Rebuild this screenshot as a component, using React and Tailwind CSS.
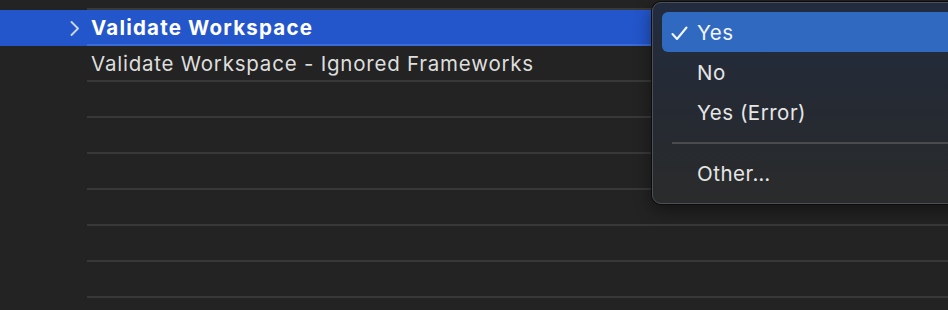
import React from "react";

const rows = [
  "Validate Workspace - Ignored Frameworks",
  "",
  "",
  "",
  "",
  "",
  "",
];

function Check() {
  return (
    <svg width="17" height="15" viewBox="0 0 17 15" fill="none">
      <path d="M1.5 8 L6 13 L15.5 1.5" stroke="#f2f4f8" strokeWidth="2.1" strokeLinecap="round" strokeLinejoin="round" />
    </svg>
  );
}

export default function App() {
  return (
    <div
      className="relative h-[310px] w-[948px] overflow-hidden bg-[#232323]"
      style={{ fontFamily: "Inter, 'Noto Sans', sans-serif" }}
    >
      {/* Settings table */}
      <div className="h-[8px]" />
      <div className="ml-[87px] h-[2px] bg-[#393939]" />

      {/* Selected row */}
      <div className="bg-[#2356cb]">
        <div className="flex h-[34px] items-center pt-[2px]">
          <div className="flex w-[87px] justify-end pr-[7px]">
            <svg width="11" height="17" viewBox="0 0 11 17" fill="none">
              <path d="M2.5 2 L9 8.5 L2.5 15" stroke="#c9d6f3" strokeWidth="1.9" strokeLinecap="round" strokeLinejoin="round" />
            </svg>
          </div>
          <span className="pl-[4px] text-[20.5px] font-bold tracking-[1.2px] text-white">Validate Workspace</span>
        </div>
        <div className="ml-[87px] h-[2px] bg-[#3a6ad8]" />
      </div>

      {rows.map((label, i) => (
        <div key={i}>
          <div className="flex h-[34px] items-center pl-[91px] pt-[2px]">
            <span className="text-[20.5px] tracking-[0.78px] text-[#dedede]">{label}</span>
          </div>
          <div className="ml-[87px] h-[2px] bg-[#383838]" />
        </div>
      ))}

      {/* Popup menu */}
      <div className="absolute left-[652px] top-[2px] h-[202px] w-[320px] rounded-[9px] shadow-[0_0_0_1px_#0c0c0c,0_6px_18px_rgba(0,0,0,0.45)]">
        <div className="h-full w-full rounded-[9px] border border-[#4c4f55] bg-gradient-to-b from-[#222c3f] via-[#252a33] to-[#2a2b2b] px-[9px] pt-[9px]">
          <div className="flex h-[40px] items-center rounded-[6px] bg-[#3069c0] pt-[3px]">
            <div className="flex w-[35px] justify-start pl-[9px]">
              <Check />
            </div>
            <span className="text-[20.5px] tracking-[0.5px] text-[#f3f5f9]">Yes</span>
          </div>
          <div className="flex h-[40px] items-center pl-[35px] pt-[3px] text-[20.5px] tracking-[0.5px] text-[#e6e6e6]">No</div>
          <div className="flex h-[40px] items-center pl-[35px] pt-[3px] text-[20.5px] tracking-[0.5px] text-[#e6e6e6]">Yes (Error)</div>
          <div className="ml-[10px] mt-[10px] h-[2px] bg-[#4a4b4d]" />
          <div className="mt-[9px] flex h-[40px] items-center pl-[35px] pt-[3px] text-[20.5px] tracking-[0.5px] text-[#e6e6e6]">Other…</div>
        </div>
      </div>
    </div>
  );
}
